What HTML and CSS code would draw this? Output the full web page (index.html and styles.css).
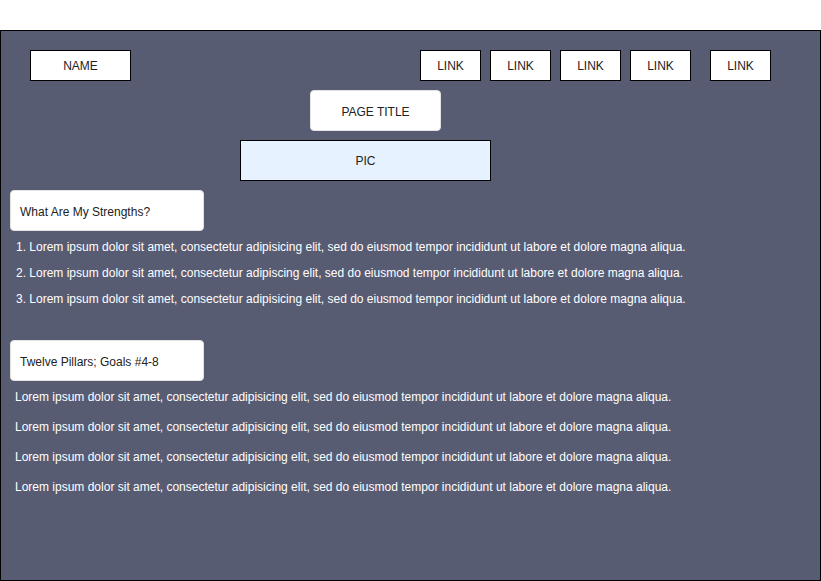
FILE: index.html
```html
<!DOCTYPE html>
<html>
<head>
<meta charset="utf-8">
<link rel="stylesheet" href="styles.css">
</head>
<body>
<div class="frame">
  <header class="top">
    <div class="box name">NAME</div>
    <nav class="links">
      <div class="box link">LINK</div>
      <div class="box link">LINK</div>
      <div class="box link">LINK</div>
      <div class="box link">LINK</div>
      <div class="box link last">LINK</div>
    </nav>
  </header>
  <div class="title">PAGE TITLE</div>
  <div class="box pic">PIC</div>
  <div class="heading">What Are My Strengths?</div>
  <div class="list">
    <p>1. Lorem ipsum dolor sit amet, consectetur adipisicing elit, sed do eiusmod tempor incididunt ut labore et dolore magna aliqua.</p>
    <p>2. Lorem ipsum dolor sit amet, consectetur adipiscing elit, sed do eiusmod tempor incididunt ut labore et dolore magna aliqua.</p>
    <p>3. Lorem ipsum dolor sit amet, consectetur adipisicing elit, sed do eiusmod tempor incididunt ut labore et dolore magna aliqua.</p>
  </div>
  <div class="heading second">Twelve Pillars; Goals #4-8</div>
  <div class="paras">
    <p>Lorem ipsum dolor sit amet, consectetur adipisicing elit, sed do eiusmod tempor incididunt ut labore et dolore magna aliqua.</p>
    <p>Lorem ipsum dolor sit amet, consectetur adipisicing elit, sed do eiusmod tempor incididunt ut labore et dolore magna aliqua.</p>
    <p>Lorem ipsum dolor sit amet, consectetur adipisicing elit, sed do eiusmod tempor incididunt ut labore et dolore magna aliqua.</p>
    <p>Lorem ipsum dolor sit amet, consectetur adipisicing elit, sed do eiusmod tempor incididunt ut labore et dolore magna aliqua.</p>
  </div>
</div>
</body>
</html>
```
FILE: styles.css
```css
* { box-sizing: border-box; }
html, body { margin: 0; padding: 0; background: #fff; }
body {
  font-family: "Liberation Sans", Arial, sans-serif;
  font-size: 12px;
  color: #222;
  padding-top: 30px;
}
.frame {
  width: 821px;
  height: 551px;
  border: 1px solid #000;
  background: #585c72;
  padding: 19px 0 0 0;
}
.top {
  display: flex;
  align-items: flex-start;
  padding-left: 29px;
}
.box {
  border: 1px solid #000;
  background: #fff;
  display: flex;
  align-items: center;
  justify-content: center;
  height: 31px;
}
.name { width: 101px; }
.links {
  display: flex;
  gap: 9px;
  margin-left: 289px;
}
.link { width: 61px; }
.link.last { margin-left: 10px; }
.title {
  margin: 9px 0 0 309px;
  width: 131px;
  height: 41px;
  padding-top: 2px;
  background: #fff;
  border: 1px solid #e2e2e2;
  border-radius: 4px;
  display: flex;
  align-items: center;
  justify-content: center;
}
.pic {
  margin: 9px 0 0 239px;
  width: 251px;
  height: 41px;
  background: #e6f2ff;
}
.heading {
  margin: 9px 0 0 9px;
  width: 194px;
  height: 41px;
  background: #fff;
  border: 1px solid #e2e2e2;
  border-radius: 4px;
  display: flex;
  align-items: center;
  padding: 2px 0 0 9px;
}
.heading.second { margin-top: 28px; }
.list, .paras { color: #fff; }
.list p, .paras p { margin: 0; white-space: nowrap; }
.list { padding: 3px 0 0 15px; }
.list p { line-height: 26px; }
.paras { padding: 1px 0 0 14px; }
.paras p { line-height: 30px; }
```
